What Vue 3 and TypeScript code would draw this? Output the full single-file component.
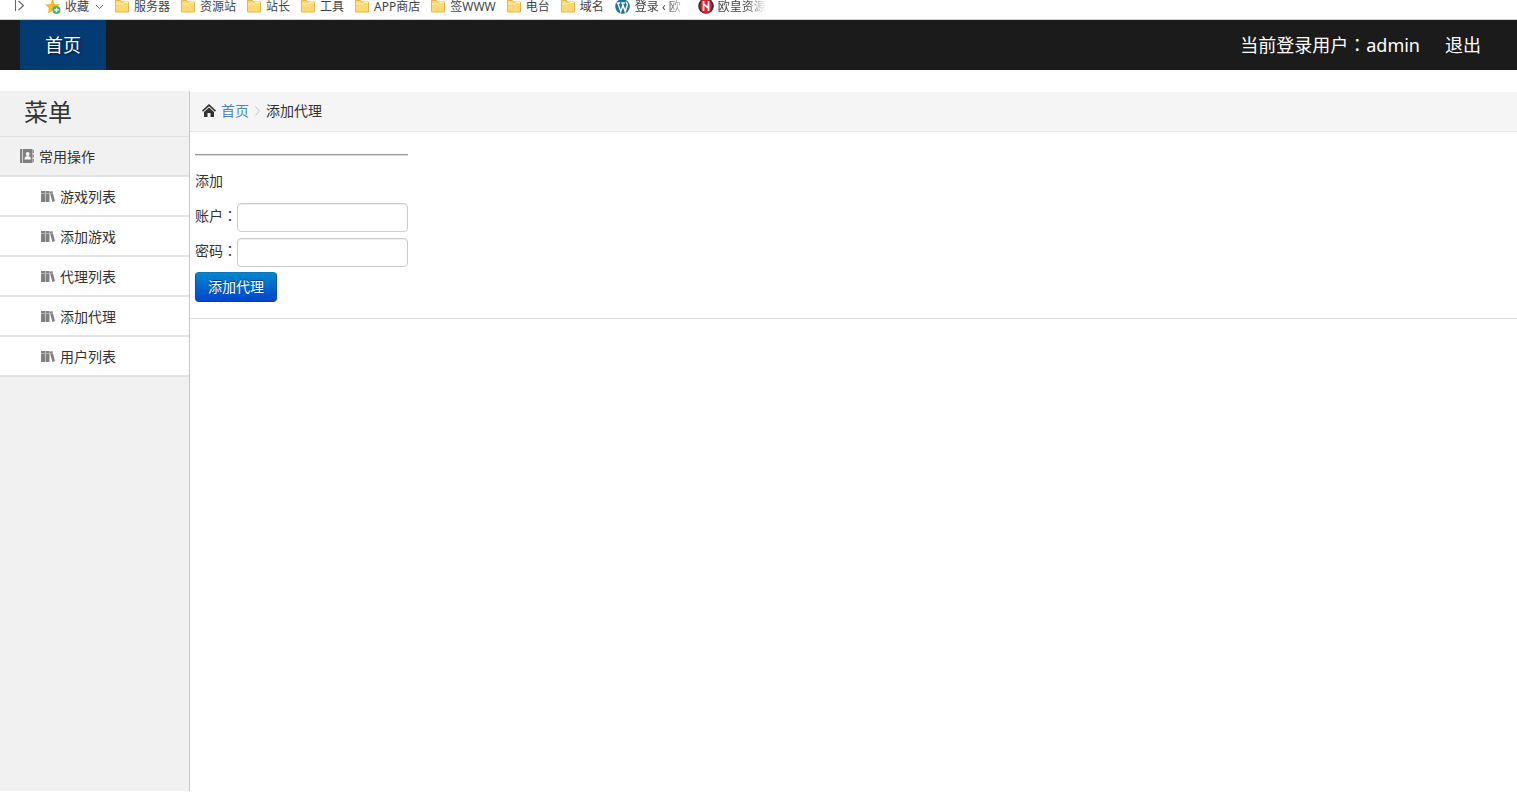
<script setup lang="ts">
import { ref } from 'vue'

interface Bookmark {
  label: string
  icon: 'folder' | 'wordpress' | 'badge'
  fade?: boolean
}

const bookmarks: Bookmark[] = [
  { label: '服务器', icon: 'folder' },
  { label: '资源站', icon: 'folder' },
  { label: '站长', icon: 'folder' },
  { label: '工具', icon: 'folder' },
  { label: 'APP商店', icon: 'folder' },
  { label: '签WWW', icon: 'folder' },
  { label: '电台', icon: 'folder' },
  { label: '域名', icon: 'folder' },
  { label: '登录 ‹ 欧', icon: 'wordpress', fade: true },
  { label: '欧皇资源', icon: 'badge', fade: true },
]

const menu: string[] = ['游戏列表', '添加游戏', '代理列表', '添加代理', '用户列表']

const account = ref('')
const password = ref('')
</script>

<template>
  <div class="page">
    <nav class="bookmarks" aria-label="收藏夹">
      <svg class="expand" width="12" height="14" viewBox="0 0 12 14" fill="none" stroke="#666" stroke-width="1.1">
        <path d="M2.500 0v11M5.500 1l5 4.500l-5 4.500" />
      </svg>
      <a class="bookmark favourite" href="#">
        <svg width="16" height="16" viewBox="0 0 16 16">
          <path d="M7.500 0l2.200 4.900 5.300.6-3.900 3.600 1.100 5.300-4.700-2.700-4.700 2.700 1.100-5.300L0 5.500l5.300-.6z" fill="#fbb924" />
          <circle cx="11.500" cy="11" r="4" fill="#3fb56c" />
          <path d="M11.500 8.800v4.400M9.300 11h4.400" stroke="#fff" stroke-width="1.300" />
        </svg>
        <span>收藏</span>
        <svg class="caret" width="9" height="6" viewBox="0 0 9 6" fill="none" stroke="#666">
          <path d="M1 1l3.500 3.500L8 1" />
        </svg>
      </a>
      <a v-for="item in bookmarks" :key="item.label" class="bookmark" :class="item.icon" href="#">
        <svg v-if="item.icon === 'folder'" width="14" height="14" viewBox="0 0 14 14">
          <path d="M.5.5h5l1 1.500h7v10H.5z" fill="#fcd972" stroke="#e9b44a" />
          <path d="M1 4h6l1.500-1.500H13" fill="none" stroke="#fff0b0" />
        </svg>
        <svg v-else-if="item.icon === 'wordpress'" width="15" height="15" viewBox="0 1 15 15">
          <circle cx="7.500" cy="7.500" r="7.300" fill="#21759b" />
          <g fill="none" stroke="#fff" stroke-width="1.400">
            <path d="M1.800 4h3.400M6.200 4h3.600M2.800 4.200l3 8.300 2-5.800M7.300 4.200l2.900 8.300 2-6.200c.6-1.800-1.300-2.200-.9-3.700" />
          </g>
        </svg>
        <svg v-else width="16" height="16" viewBox="0 1 16 16">
          <circle cx="8" cy="8" r="7.800" fill="#333" />
          <ellipse cx="8" cy="8" rx="5.800" ry="7.400" fill="#e51c2c" />
          <path d="M5.500 3v10M10.500 3v10M5.500 6l5 4" fill="none" stroke="#fff" stroke-width="1.700" />
        </svg>
        <span :class="{ fade: item.fade }">{{ item.label }}</span>
      </a>
    </nav>

    <header class="navbar">
      <a class="nav-home" href="#">首页</a>
      <div class="nav-user">
        <span>当前登录用户<span class="colon">：</span>admin</span>
        <a href="#">退出</a>
      </div>
    </header>

    <div class="workspace">
      <aside class="sidebar">
        <h2 class="sidebar-title">菜单</h2>
        <div class="group">
          <svg width="14" height="14" viewBox="0 0 14 14">
            <path d="M0 0h2v14H0zM2.700 0h9.800v14H2.700z" fill="#808080" />
            <path d="M12.500 1H14v3h-1.500zM12.500 5.500H14v3h-1.500zM12.500 10H14v3h-1.500z" fill="#999" />
            <circle cx="7.700" cy="5" r="1.900" fill="#f5f5f5" />
            <path d="M4.500 10.500c0-2.700 1.400-3.400 3.200-3.400s3.200.7 3.200 3.400z" fill="#f5f5f5" />
          </svg>
          <span>常用操作</span>
        </div>
        <ul class="menu">
          <li v-for="item in menu" :key="item">
            <a href="#">
              <svg width="14" height="11" viewBox="0 0 14 11">
                <path d="M0 0h4v11H0zM4.500 0h4v11h-4zM8.700.7L11.300 0 14 10.100l-2.600.9z" fill="#808080" />
                <path d="M0 2.500h4M4.500 2.500h4M9.300 3l2.500-.7" stroke="#b8b8b8" />
              </svg>
              <span>{{ item }}</span>
            </a>
          </li>
        </ul>
      </aside>

      <main class="content">
        <nav class="breadcrumb" aria-label="路径">
          <svg class="house" width="14" height="13" viewBox="0 0 14 13">
            <path d="M0 6.600L7 0l7 6.600-1 1.100L7 2.200 1 7.700z" fill="#333" />
            <path d="M2 8l5-4.600L12 8v5H8.500V9h-3v4H2z" fill="#333" />
          </svg>
          <a href="#">首页</a>
          <svg class="separator" width="5" height="10" viewBox="0 0 5 10" fill="none" stroke="#c4c4c4">
            <path d="M.5.5L4.500 5l-4 4.500" />
          </svg>
          <span>添加代理</span>
        </nav>
        <form class="agent-form" @submit.prevent>
          <div class="fields">
            <hr />
            <p>添加</p>
            <div class="field">
              <label for="account">账户<span class="colon">：</span></label>
              <input id="account" v-model="account" type="text" />
            </div>
            <div class="field">
              <label for="password">密码<span class="colon">：</span></label>
              <input id="password" v-model="password" type="password" />
            </div>
            <button type="submit">添加代理</button>
          </div>
        </form>
      </main>
    </div>
  </div>
</template>

<style>
body {
  margin: 0;
  background: #fff;
}
</style>

<style scoped>
.page {
  box-sizing: border-box;
  display: flex;
  flex-direction: column;
  min-height: 100vh;
  padding-bottom: 7px;
  color: #333;
  font-family: "Noto Sans", "Noto Sans CJK SC", sans-serif;
  font-size: 14px;
  line-height: 20px;
}
.colon {
  font-family: "Noto Sans CJK TC", sans-serif;
}
a {
  color: inherit;
  text-decoration: none;
}
svg {
  flex: none;
}

.bookmarks {
  display: flex;
  align-items: flex-start;
  gap: 11px;
  height: 19px;
  padding-left: 13px;
  border-bottom: 1px solid #ccc;
  color: #444;
  font-size: 12px;
  line-height: 16px;
  white-space: nowrap;
}
.bookmark {
  display: flex;
  align-items: center;
  gap: 5px;
  height: 14px;
}
.expand {
  margin-right: 9px;
}
.favourite {
  gap: 4px;
}
.caret {
  margin-left: 2px;
}
.badge {
  gap: 4px;
}
.wordpress span {
  width: 52px;
}
.fade {
  mask-image: linear-gradient(to right, #000 60%, transparent);
}

.navbar {
  display: flex;
  justify-content: space-between;
  height: 50px;
  padding: 0 36px 0 20px;
  background: #1b1b1b;
  color: #fff;
  font-size: 18px;
  line-height: 50px;
}
.nav-home {
  padding: 0 25px;
  background: #033c73;
  text-shadow: 1px 1px 2px #001a38;
}
.nav-user {
  display: flex;
  align-items: baseline;
  gap: 25px;
}
.nav-user .colon {
  line-height: 1;
}

.workspace {
  display: flex;
  flex: 1;
  margin-top: 21px;
}
.sidebar {
  flex: none;
  width: 189px;
  border-right: 1px solid #c8c8c8;
  background: #f1f1f1;
}
.sidebar-title {
  margin: 0;
  padding: 0 0 4px 24px;
  border-bottom: 1px solid #e4e4e4;
  font-size: 24px;
  font-weight: 400;
  line-height: 41px;
}
.group {
  display: flex;
  align-items: center;
  gap: 5px;
  height: 38px;
  padding-left: 20px;
  border-bottom: 2px solid #e2e2e2;
}
.menu {
  margin: 0;
  padding: 0;
  list-style: none;
}
.menu a {
  display: flex;
  align-items: center;
  gap: 5px;
  height: 38px;
  padding-left: 41px;
  border-bottom: 2px solid #e4e4e4;
  background: #fff;
}
.group span,
.menu span {
  line-height: 22px;
  padding-top: 2px;
}

.content {
  flex: 1;
  min-width: 0;
  padding-top: 1px;
}
.breadcrumb {
  display: flex;
  align-items: center;
  gap: 5px;
  height: 37px;
  padding: 0 12px 2px;
  border-bottom: 1px solid #e5e5e5;
  background: #f5f5f5;
}
.breadcrumb a {
  color: #4a86c5;
}
.separator {
  margin: 0 1px;
}
.agent-form {
  padding: 22px 5px 16px;
  border-bottom: 1px solid #e2e2e2;
}
.fields {
  display: flex;
  flex-direction: column;
  align-items: flex-start;
  width: 213px;
}
hr {
  box-sizing: border-box;
  width: 100%;
  height: 2px;
  margin: 0 0 15px;
  border: 0;
  border-top: 1px solid #999;
  border-bottom: 1px solid #ddd;
}
p {
  margin: 0 0 12px;
}
.field {
  display: flex;
  width: 100%;
  margin-bottom: 6px;
}
label {
  flex: none;
  line-height: 24px;
}
input {
  box-sizing: border-box;
  flex: 1;
  min-width: 0;
  height: 29px;
  padding: 4px 6px;
  border: 1px solid #ccc;
  border-radius: 4px;
  background: #fff;
  box-shadow: inset 0 1px 1px #eee;
  font: inherit;
}
button {
  box-sizing: border-box;
  height: 30px;
  margin-top: -1px;
  padding: 0 12px;
  border: 1px solid #0055b3;
  border-color: #0877bd #0055b3 #003fae;
  border-radius: 4px;
  background: linear-gradient(#0088cc, #0044cc);
  color: #fff;
  font: inherit;
  text-shadow: 0 -1px 0 #003f8a;
}
</style>
